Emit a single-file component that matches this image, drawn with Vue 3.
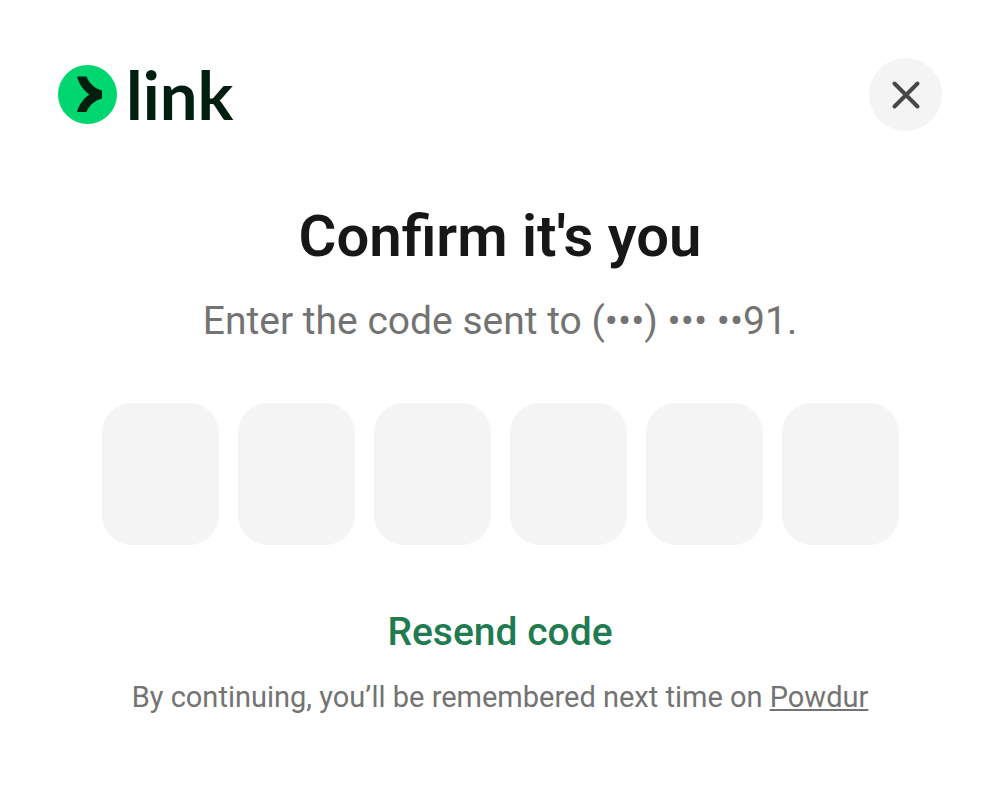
<script setup>
import { ref } from 'vue'

const digits = ref(['', '', '', '', '', ''])
</script>

<template>
  <main class="dialog">
    <header class="header">
      <div class="logo">
        <svg class="mark" viewBox="0 0 59 59" aria-hidden="true">
          <circle cx="29.5" cy="29.5" r="29.5" fill="#00d66f" />
          <path
            d="M19 11.500H28.500C31 18 36.500 23.500 44 25.500V33.500C36.500 35.500 31 40.500 28.500 47H19C21 39.500 25.500 33.500 31.500 29.500C25.500 25.500 21 19 19 11.500Z"
            fill="#011e0f"
          />
        </svg>
        <span class="wordmark">link</span>
      </div>
      <button class="close" type="button" aria-label="Close">
        <svg class="cross" viewBox="0 0 30 30" aria-hidden="true">
          <path d="M3.500 3.500L26.500 26.500M26.500 3.500L3.500 26.500" />
        </svg>
      </button>
    </header>

    <h1 class="title">Confirm it's you</h1>
    <p class="subtitle">Enter the code sent to (•••) ••• ••91.</p>

    <form class="code" @submit.prevent>
      <input
        v-for="(digit, index) in digits"
        :key="index"
        v-model="digits[index]"
        class="digit"
        type="text"
        inputmode="numeric"
        maxlength="1"
        :aria-label="`Digit ${index + 1}`"
      />
    </form>

    <button class="resend" type="button">Resend code</button>
    <p class="notice">
      By continuing, you’ll be remembered next time on <a class="merchant" href="#">Powdur</a>
    </p>
  </main>
</template>

<style>
body {
  background: #ffffff;
}
</style>

<style scoped>
.dialog {
  box-sizing: border-box;
  display: flex;
  flex-direction: column;
  align-items: center;
  padding: 58px;
  font-family: Roboto, "Liberation Sans", sans-serif;
  color: #737373;
  text-align: center;
}

.header {
  display: flex;
  align-items: center;
  justify-content: space-between;
  width: 100%;
}

.logo {
  display: flex;
  align-items: center;
  gap: 9px;
}

.mark {
  width: 59px;
  height: 59px;
}

.wordmark {
  font-family: Lato, sans-serif;
  font-size: 67px;
  font-weight: 700;
  line-height: 73px;
  color: #011e0f;
}

.close {
  display: flex;
  align-items: center;
  justify-content: center;
  width: 73px;
  height: 73px;
  padding: 0;
  border: 0;
  border-radius: 50%;
  background: #f4f4f4;
  cursor: pointer;
}

.cross {
  width: 30px;
  height: 30px;
  fill: none;
  stroke: #474747;
  stroke-width: 4;
  stroke-linecap: round;
}

.title {
  margin: 67px 0 0;
  font-size: 58px;
  font-weight: 600;
  line-height: 76px;
  color: #171717;
}

.subtitle {
  margin: 17px 0 0;
  font-size: 39px;
  line-height: 60px;
}

.code {
  display: flex;
  justify-content: center;
  gap: 19px;
  width: 100%;
  margin-top: 52px;
}

.digit {
  box-sizing: border-box;
  flex: 0 1 117px;
  min-width: 0;
  height: 142px;
  padding: 0;
  border: 0;
  border-radius: 30px;
  background: #f4f4f4;
  font-family: inherit;
  font-size: 58px;
  text-align: center;
  color: #171717;
}

.resend {
  margin-top: 58px;
  padding: 0;
  border: 0;
  background: none;
  font-family: inherit;
  font-size: 39px;
  font-weight: 500;
  line-height: 58px;
  color: #217b50;
  cursor: pointer;
}

.notice {
  margin: 16px 0 0;
  font-size: 29px;
  line-height: 40px;
}

.merchant {
  color: inherit;
}
</style>
